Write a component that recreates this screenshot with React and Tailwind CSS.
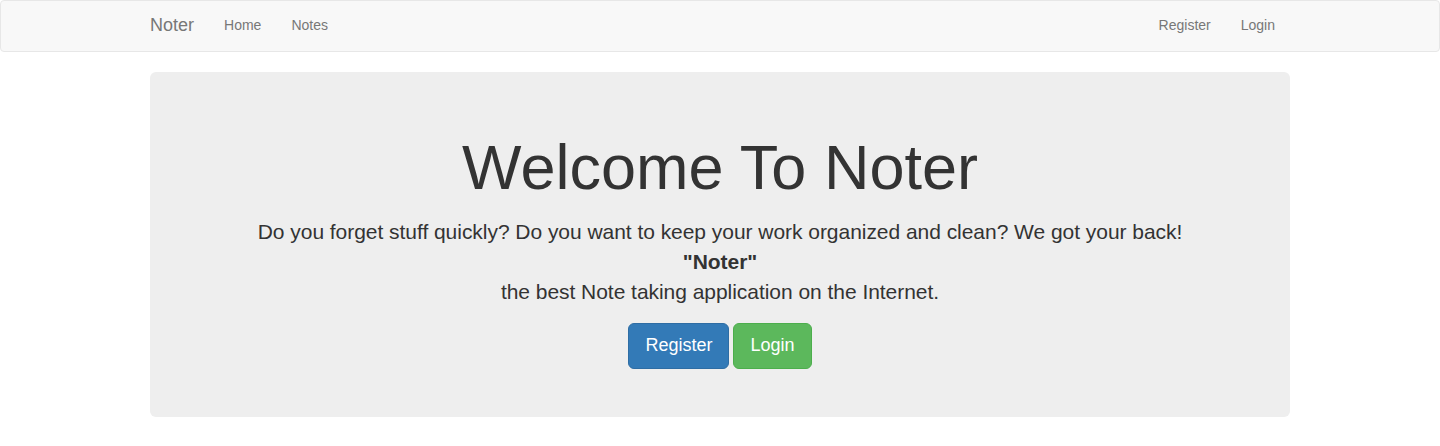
import React from 'react'

const font = { fontFamily: '"Liberation Sans", Arial, sans-serif' }

function Navbar() {
  return (
    <nav className="h-[52px] bg-[#f8f8f8] border border-[#e7e7e7] rounded-[4px]">
      <div className="w-[1140px] mx-auto flex items-start justify-between h-[50px]">
        <div className="flex items-start">
          <a className="text-[18px] leading-[20px] text-[#777] pr-[15px] pt-[14px] pb-[16px]">Noter</a>
          <a className="text-[14px] leading-[20px] text-[#777] px-[15px] pt-[14px] pb-[16px]">Home</a>
          <a className="text-[14px] leading-[20px] text-[#777] px-[15px] pt-[14px] pb-[16px]">Notes</a>
        </div>
        <div className="flex items-start">
          <a className="text-[14px] leading-[20px] text-[#777] px-[15px] pt-[14px] pb-[16px]">Register</a>
          <a className="text-[14px] leading-[20px] text-[#777] px-[15px] pt-[14px] pb-[16px]">Login</a>
        </div>
      </div>
    </nav>
  )
}

export default function App() {
  return (
    <div className="bg-white min-h-[446px] text-[#333]" style={font}>
      <Navbar />
      <div className="w-[1140px] mx-auto mt-[20px]">
        {/* Jumbotron */}
        <div className="bg-[#eee] rounded-[6px] px-[60px] pt-[55px] pb-[48px] text-center">
          <h1 className="text-[63px] leading-[80px] mb-[10px]">Welcome To Noter</h1>
          <p className="text-[21px] leading-[30px] mb-[16px] tracking-[-0.04px]">
            Do you forget stuff quickly? Do you want to keep your work organized and clean? We got your back!
            <br />
            <strong>"Noter"</strong>
            <br />
            the best Note taking application on the Internet.
          </p>
          <div className="flex justify-center gap-[4px]">
            <a className="inline-block px-[16px] pt-[9px] pb-[11px] text-[18px] leading-[24px] text-white bg-[#337ab7] border border-[#2e6da4] rounded-[6px]">
              Register
            </a>
            <a className="inline-block px-[16px] pt-[9px] pb-[11px] text-[18px] leading-[24px] text-white bg-[#5cb85c] border border-[#4cae4c] rounded-[6px]">
              Login
            </a>
          </div>
        </div>
      </div>
    </div>
  )
}
